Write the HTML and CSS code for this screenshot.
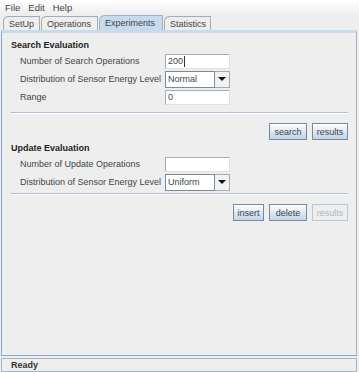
FILE: index.html
```html
<!DOCTYPE html>
<html lang="en">
<head>
    <meta charset="UTF-8">
    <title>Experiments</title>
    <link rel="stylesheet" href="styles.css">
</head>
<body>
    <div class="window">
        <div class="menubar">
            <span class="menu">File</span>
            <span class="menu">Edit</span>
            <span class="menu">Help</span>
        </div>

        <div class="tabs">
            <div class="tab tab-setup">SetUp</div>
            <div class="tab tab-ops">Operations</div>
            <div class="tab tab-exp selected">Experiments</div>
            <div class="tab tab-stats">Statistics</div>
        </div>

        <div class="panel">
            <div class="section">
                <div class="title">Search Evaluation</div>
                <div class="form">
                    <label>Number of Search Operations</label>
                    <div class="field"><span class="value">200</span><span class="caret"></span></div>

                    <label>Distribution of Sensor Energy Level</label>
                    <div class="combo">
                        <div class="combo-text">Normal</div>
                        <div class="combo-btn"><span class="arrow"></span></div>
                    </div>

                    <label>Range</label>
                    <div class="field"><span class="value">0</span></div>
                </div>
                <div class="separator"></div>
                <div class="buttons">
                    <button class="btn btn-search">search</button>
                    <button class="btn btn-results">results</button>
                </div>
            </div>

            <div class="section section-update">
                <div class="title">Update Evaluation</div>
                <div class="form">
                    <label>Number of Update Operations</label>
                    <div class="field"></div>

                    <label>Distribution of Sensor Energy Level</label>
                    <div class="combo">
                        <div class="combo-text">Uniform</div>
                        <div class="combo-btn"><span class="arrow"></span></div>
                    </div>
                </div>
                <div class="separator"></div>
                <div class="buttons">
                    <button class="btn btn-insert">insert</button>
                    <button class="btn btn-delete">delete</button>
                    <button class="btn btn-results" disabled>results</button>
                </div>
            </div>
        </div>

        <div class="statusbar">Ready</div>
    </div>
</body>
</html>
```

FILE: styles.css
```css
body {
    margin: 0;
    padding: 0;
    background-color: #eeeeee;
    font-family: "Liberation Sans", Arial, sans-serif;
    font-size: 9px;
    color: #444;
}
.window {
    width: 359px;
    height: 372px;
    display: flex;
    flex-direction: column;
    overflow: hidden;
}

/* menu */
.menubar {
    height: 14px;
    display: flex;
    align-items: center;
    padding-left: 5px;
    gap: 8px;
    background: linear-gradient(#ffffff, #eeeeee);
    font-size: 9.5px;
}
.menu {
    color: #444;
}

/* tabs */
.tabs {
    height: 16px;
    display: flex;
    align-items: flex-end;
    padding-left: 3px;
}
.tab {
    height: 14px;
    box-sizing: border-box;
    border: 1px solid #a4adb6;
    border-bottom: none;
    border-top-left-radius: 6px 5px;
    margin-right: 1px;
    padding-left: 5px;
    display: flex;
    align-items: center;
    background-color: #eeeeee;
    color: #444;
    font-size: 9px;
    white-space: nowrap;
    overflow: hidden;
}
.tab-setup { width: 37px; }
.tab-ops { width: 57px; }
.tab-exp { width: 64px; }
.tab-stats { width: 47px; }
.tab.selected {
    background-color: #c8daee;
    border-color: #9fb4cc;
    height: 15px;
}

/* panel */
.panel {
    margin-left: 1px;
    width: 356px;
    height: 326px;
    box-sizing: border-box;
    border: 1px solid #8aa4cc;
    border-right-color: #a3b5c6;
    border-top: 3px solid #c8daee;
    padding-top: 6px;
}
.section {
    padding-left: 9px;
    padding-right: 8px;
}
.section-update {
    margin-top: 2px;
}
.section-update .separator {
    margin-top: 2px;
}
.title {
    height: 12px;
    line-height: 12px;
    font-weight: bold;
    color: #222;
}
.form {
    display: grid;
    grid-template-columns: 145px 65px;
    grid-auto-rows: 18px;
    align-items: center;
    padding-left: 9px;
    margin-top: 1px;
}
.form label {
    color: #444;
}
.field {
    height: 15px;
    box-sizing: border-box;
    border: 1px solid #a0acb8;
    border-right-color: #e0e0e0;
    border-bottom-color: #e0e0e0;
    background-color: #fff;
    display: flex;
    align-items: center;
    padding-left: 2px;
    color: #444;
}
.caret {
    width: 1px;
    height: 11px;
    background-color: #333;
    margin-left: 1px;
}
.combo {
    height: 17px;
    display: flex;
}
.combo-text {
    width: 50px;
    box-sizing: border-box;
    border: 1px solid #7a8a99;
    background-color: #fff;
    display: flex;
    align-items: center;
    padding-left: 2px;
    color: #444;
}
.combo-btn {
    width: 15px;
    box-sizing: border-box;
    border: 1px solid #a0acb8;
    border-left: none;
    background-color: #f2f2f2;
    display: flex;
    align-items: center;
    justify-content: center;
}
.arrow {
    width: 0;
    height: 0;
    border-left: 4px solid transparent;
    border-right: 4px solid transparent;
    border-top: 4px solid #111;
}
.separator {
    height: 1px;
    margin-top: 6px;
    background-color: #aebfd2;
    border-bottom: 1px solid #fff;
}
.buttons {
    display: flex;
    justify-content: flex-end;
    gap: 5px;
    margin-top: 9px;
}
.btn {
    height: 17px;
    box-sizing: border-box;
    padding: 0;
    border: 1px solid #7a8a99;
    background: linear-gradient(#ffffff, #d6e3f1 60%, #c2d5ea);
    font-family: "Liberation Sans", Arial, sans-serif;
    font-size: 9px;
    color: #444;
}
.btn-search { width: 38px; }
.btn-results { width: 36px; }
.btn-insert { width: 31px; }
.btn-delete { width: 38px; }
.btn:disabled {
    background: #eeeeee;
    border-color: #b8c8d8;
    color: #b0b8c0;
}

/* status */
.statusbar {
    margin-top: 2px;
    margin-left: 1px;
    width: 356px;
    height: 14px;
    box-sizing: border-box;
    border: 1px solid #a3b5c6;
    padding-left: 9px;
    display: flex;
    align-items: center;
    font-weight: bold;
    color: #333;
}
```
